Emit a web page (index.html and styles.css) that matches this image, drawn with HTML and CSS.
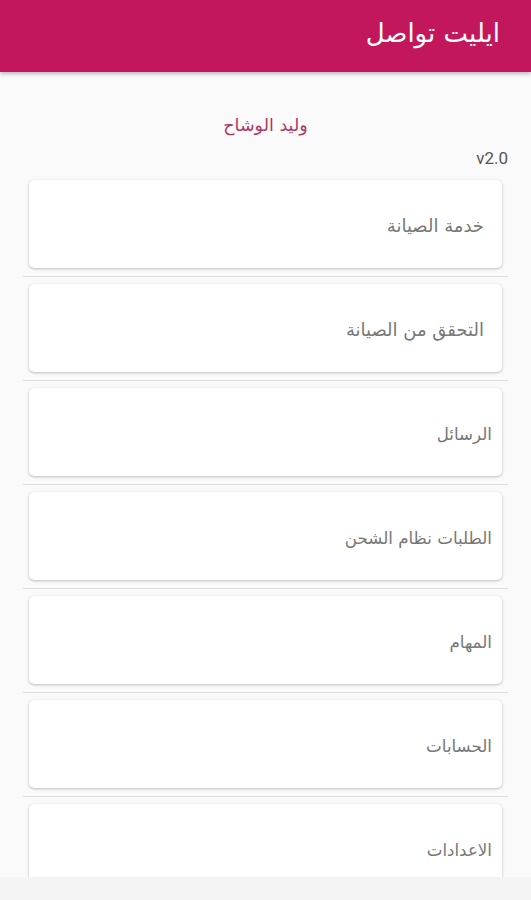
FILE: index.html
```html
<!DOCTYPE html>
<html lang="ar" dir="rtl">
<head>
<meta charset="utf-8">
<title>ايليت تواصل</title>
<link rel="stylesheet" href="styles.css">
</head>
<body>
<div class="screen">
  <header class="appbar">
    <h1 class="appbar-title">ايليت تواصل</h1>
  </header>
  <main class="content">
    <div class="user-name">وليد الوشاح</div>
    <div class="version" dir="ltr">v2.0</div>
    <ul class="menu">
      <li class="menu-item"><div class="card">خدمة الصيانة</div></li>
      <li class="menu-item"><div class="card">التحقق من الصيانة</div></li>
      <li class="menu-item"><div class="card card--wide">الرسائل</div></li>
      <li class="menu-item"><div class="card card--wide">الطلبات نظام الشحن</div></li>
      <li class="menu-item"><div class="card card--wide">المهام</div></li>
      <li class="menu-item"><div class="card card--wide">الحسابات</div></li>
      <li class="menu-item"><div class="card card--wide">الاعدادات</div></li>
    </ul>
  </main>
  <div class="bottom-strip"></div>
</div>
</body>
</html>
```
FILE: styles.css
```css
* { box-sizing: border-box; }
html, body { margin: 0; padding: 0; }
body {
  background: #f4f4f4;
  font-family: "DejaVu Sans", "Noto Sans", sans-serif;
  width: 531px;
  height: 900px;
  overflow: hidden;
}
.screen {
  display: flex;
  flex-direction: column;
  height: 900px;
}
.appbar {
  height: 72px;
  background: #c2185b;
  display: flex;
  align-items: flex-start;
  padding: 16px 31px 0 0;
  box-shadow: 0 2px 4px rgba(0,0,0,0.25);
  position: relative;
  z-index: 2;
  flex: none;
}
.appbar-title {
  margin: 0;
  color: #ffffff;
  font-size: 26px;
  font-weight: normal;
  line-height: 34px;
}
.content {
  height: 805px;
  flex: none;
  background: #fafafa;
  overflow: hidden;
}
.user-name {
  margin-top: 41px;
  text-align: center;
  font-size: 17.5px;
  line-height: 24px;
  color: #ad3767;
}
.version {
  text-align: right;
  padding-right: 23px;
  margin-top: 11px;
  font-size: 17px;
  line-height: 20px;
  color: #555555;
  font-family: "Roboto", "DejaVu Sans", sans-serif;
}
.menu {
  list-style: none;
  margin: 12px 0 0 0;
  padding: 0 23px;
}
.menu-item {
  padding-bottom: 8px;
  border-bottom: 1px solid #dedede;
  margin-bottom: 7px;
}
.card {
  margin: 0 6px;
  height: 88px;
  background: #ffffff;
  border-radius: 5px;
  box-shadow: 0 1px 3px rgba(0,0,0,0.24), 0 0 1px rgba(0,0,0,0.08);
  display: flex;
  align-items: center;
  padding: 3px 18px 0 18px;
  font-size: 18px;
  color: #777777;
}
.card--wide {
  padding-right: 10px;
  font-size: 16.7px;
}
.bottom-strip {
  flex: 1;
  background: #f4f4f4;
}
```
